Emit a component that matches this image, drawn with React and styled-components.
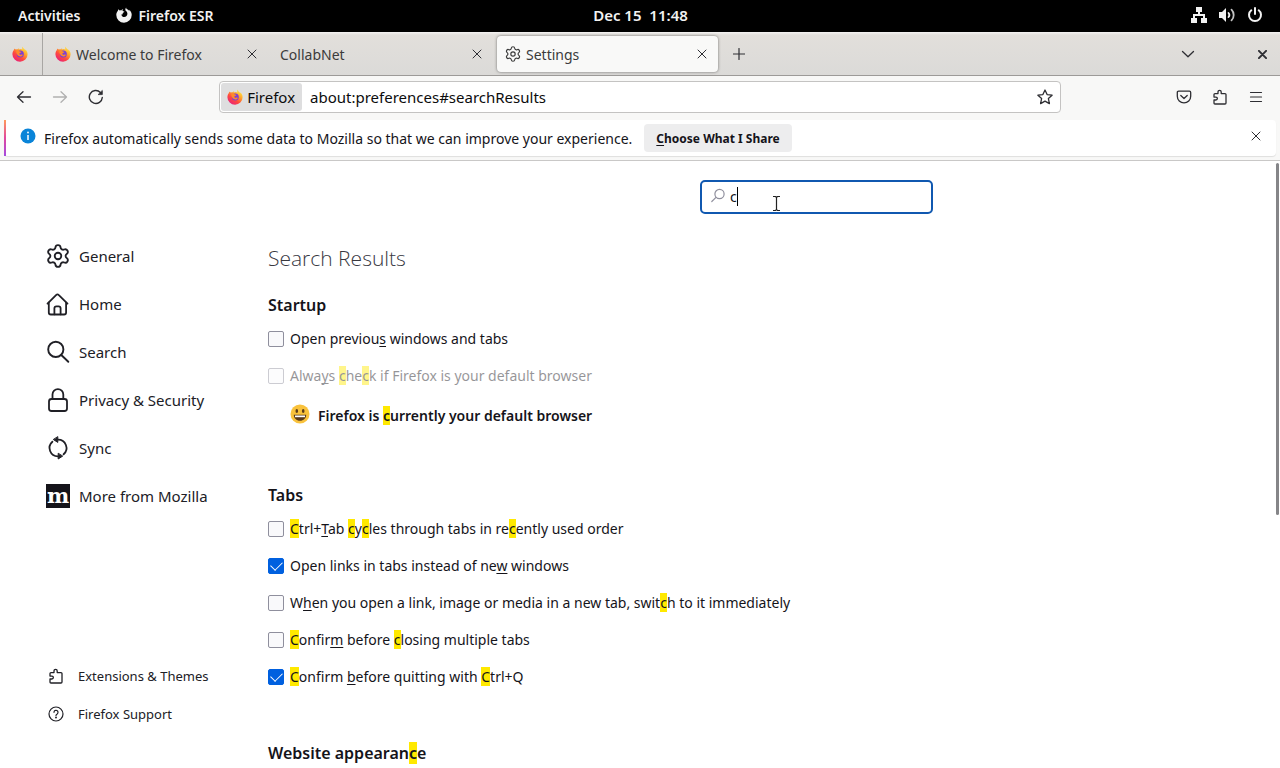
import React, { useState } from 'react';
import styled, { createGlobalStyle, css } from 'styled-components';

const GlobalStyle = createGlobalStyle`
  * {
    box-sizing: border-box;
  }

  body {
    margin: 0;
    background: #fff;
    color: #15141a;
    font-family: 'Noto Sans', 'Open Sans', sans-serif;
    font-size: 14px;
  }

  button, input {
    font: inherit;
    color: inherit;
  }
`;

const Screen = styled.div`
  display: flex;
  flex-direction: column;
  height: 100vh;
  overflow: hidden;
`;

/* ---------- desktop bar ---------- */

const DesktopBar = styled.header`
  display: grid;
  grid-template-columns: 1fr auto 1fr;
  align-items: center;
  flex: none;
  height: 32px;
  padding: 0 17px 2px 18px;
  background: #000;
  color: #f2f2f2;
  font-weight: 600;
  white-space: pre;
`;

const DesktopGroup = styled.div`
  display: flex;
  align-items: center;
  justify-content: ${({ $end }) => ($end ? 'flex-end' : 'flex-start')};
  gap: ${({ $end }) => ($end ? '12px' : '36px')};
`;

const DesktopButton = styled.button`
  display: flex;
  align-items: center;
  gap: 6px;
  padding: 0;
  border: 0;
  background: none;
`;

const Clock = styled(DesktopButton)`
  font-size: 15px;
`;

/* ---------- tabs ---------- */

const TabStrip = styled.nav`
  display: flex;
  align-items: center;
  flex: none;
  height: 44px;
  padding-top: 1px;
  background: linear-gradient(#f4f3f2, #e2dfdb 3px, #dbdad8);
  border-bottom: 1px solid #9c9a98;
  color: #3b3b3b;
`;

const PinnedTab = styled.button`
  display: flex;
  align-items: center;
  align-self: stretch;
  width: 43px;
  padding: 0 0 0 12px;
  border: 0;
  border-right: 1px solid #a8a6a3;
  background: none;
`;

const Tab = styled.div`
  display: flex;
  align-items: center;
  gap: 5px;
  width: 225px;
  height: 36px;
  padding: 0 8px 0 12px;

  ${({ $active }) => $active && css`
    width: 221px;
    margin-left: 4px;
    padding-left: 8px;
    border-radius: 4px;
    background: #f9f9f8;
    box-shadow: 0 0 3px rgba(0, 0, 0, 0.5);
  `}
`;

const TabTitle = styled.span`
  flex: 1;
`;

const IconButton = styled.button`
  display: flex;
  align-items: center;
  justify-content: center;
  flex: none;
  width: ${({ $size }) => $size || 36}px;
  height: ${({ $size }) => $size || 36}px;
  padding: 0;
  border: 0;
  background: none;
  color: ${({ $muted }) => ($muted ? '#b0b0b0' : '#2e2e33')};
`;

const WindowButtons = styled.div`
  display: flex;
  gap: 38px;
  margin-left: auto;
`;

/* ---------- toolbar ---------- */

const Toolbar = styled.div`
  display: grid;
  grid-template-columns: auto 1fr 8fr 1fr auto;
  align-items: center;
  flex: none;
  height: 44px;
  padding: 0 6px 3px;
  background: #f8f8f7;
`;

const ToolGroup = styled.div`
  display: flex;
  grid-column: ${({ $column }) => $column};
`;

const UrlBar = styled.div`
  display: flex;
  align-items: center;
  grid-column: 3;
  height: 32px;
  padding: 1px;
  border: 1px solid #c4c3c2;
  border-radius: 4px;
  background: #fff;
  color: #0c0c0d;
  font-size: 15px;
`;

const Identity = styled.button`
  display: flex;
  align-items: center;
  gap: 4px;
  height: 28px;
  padding: 0 7px 0 6px;
  border: 0;
  border-radius: 3px;
  background: #dededf;
`;

const UrlInput = styled.input`
  flex: 1;
  min-width: 0;
  padding: 0 8px;
  border: 0;
  outline: 0;
  background: none;
`;

/* ---------- notification ---------- */

const NoticeWrap = styled.div`
  flex: none;
  height: 41px;
  padding: 0 4px 4px;
  background: #f8f8f7;
  border-bottom: 1px solid #c9c8c7;
`;

const Notice = styled.div`
  display: flex;
  align-items: center;
  height: 36px;
  padding-right: 10px;
  border-radius: 4px;
  background: #fff;
  box-shadow: 0 1px 1px rgba(0, 0, 0, 0.1);

  &::before {
    content: '';
    align-self: stretch;
    width: 2px;
    margin-right: 14px;
    background: linear-gradient(#ff9a5a, #e0479e 50%, #a44be0);
  }
`;

const NoticeIcon = styled.svg`
  flex: none;
  margin-bottom: 4px;
`;

const NoticeText = styled.span`
  margin: 0 12px 0 8px;
`;

const NoticeButton = styled.button`
  height: 28px;
  padding: 0 12px;
  border: 0;
  border-radius: 4px;
  background: #ededee;
  font-size: 12px;
  font-weight: 700;
`;

const NoticeClose = styled(IconButton)`
  margin: 0 0 4px auto;
`;

/* ---------- preferences page ---------- */

const Page = styled.div`
  display: flex;
  flex: 1;
  min-height: 0;
  position: relative;
`;

const Sidebar = styled.aside`
  display: flex;
  flex-direction: column;
  justify-content: space-between;
  flex: none;
  width: 268px;
  padding: 71px 0 35px 46px;
`;

const NavLink = styled.a`
  display: flex;
  align-items: center;
  gap: 9px;
  height: 48px;
  color: #202026;
  font-size: 15px;
  text-decoration: none;
`;

const FooterLink = styled(NavLink)`
  gap: 14px;
  height: 38px;
  padding-left: 2px;
  font-size: 13px;
`;

const MozillaMark = styled.span`
  display: flex;
  justify-content: center;
  width: 24px;
  height: 24px;
  background: #15141a;
  color: #fff;
  font: bold 21px/24px 'DejaVu Serif', serif;
`;

const Content = styled.main`
  flex: 1;
  max-width: 665px;
  padding-top: 19px;
`;

const SearchBox = styled.label`
  display: flex;
  align-items: center;
  gap: 4px;
  position: relative;
  width: 233px;
  height: 34px;
  margin-left: auto;
  padding: 0 8px 2px;
  border: 2px solid #1058b0;
  border-radius: 5px;
  color: #8f8f9d;
`;

const SearchInput = styled.input`
  flex: 1;
  min-width: 0;
  padding: 0;
  border: 0;
  outline: 0;
  background: none;
  color: #15141a;
`;

const Caret = styled.span`
  position: absolute;
  left: 35px;
  top: 5px;
  width: 1px;
  height: 19px;
  background: #000;
`;

const Pointer = styled.svg`
  position: absolute;
  left: 70px;
  top: 13px;
`;

const PageTitle = styled.h1`
  height: 40px;
  margin: 24px 0 13px;
  color: #38383f;
  font-family: 'Open Sans', 'Noto Sans', sans-serif;
  font-size: 21px;
  font-weight: 300;
  line-height: 40px;
`;

const Section = styled.section`
  margin-bottom: 44px;
`;

const SectionTitle = styled.h2`
  margin: 0;
  font-size: 16px;
  font-weight: 600;
  line-height: 29px;
`;

const Option = styled.label`
  display: flex;
  align-items: center;
  gap: 6px;
  height: 37px;
  opacity: ${({ $disabled }) => ($disabled ? 0.45 : 1)};
`;

const Checkbox = styled.input`
  appearance: none;
  display: flex;
  justify-content: center;
  flex: none;
  width: 16px;
  height: 16px;
  margin: 0;
  border: 1px solid #8f8f9d;
  border-radius: 2px;
  background: #f9f9fb;

  &:checked {
    border-color: #0060df;
    background: #0060df;
  }

  &:checked::before {
    content: '';
    width: 6px;
    height: 10px;
    border: solid #fff;
    border-width: 0 1px 1px 0;
    transform: rotate(45deg);
  }
`;

const Status = styled.p`
  display: flex;
  align-items: center;
  gap: 8px;
  height: 43px;
  margin: 0;
  padding-left: 22px;
  font-weight: 600;
`;

const StatusIcon = styled.svg`
  margin-bottom: 4px;
`;

const Mark = styled.mark`
  background: #ffe900;
  color: inherit;
`;

const Key = styled.u`
  text-underline-offset: 2px;
  text-decoration-skip-ink: none;
`;

const Scrollbar = styled.div`
  position: absolute;
  top: 2px;
  right: 1px;
  width: 3px;
  height: 58%;
  border-radius: 2px;
  background: #858588;
`;

/* ---------- icons ---------- */

const Icon = ({ size = 16, box = 16, stroke = 1.2, children }) => (
  <svg
    width={size}
    height={size}
    viewBox={`0 0 ${box} ${box}`}
    fill="none"
    stroke="currentColor"
    strokeWidth={stroke}
    strokeLinecap="round"
    strokeLinejoin="round"
    aria-hidden="true"
  >
    {children}
  </svg>
);

const FirefoxLogo = ({ id }) => (
  <svg width="16" height="16" viewBox="0 0 16 16" aria-hidden="true">
    <defs>
      <linearGradient id={`${id}-body`} x1="0.85" y1="0.05" x2="0.2" y2="0.95">
        <stop offset="0" stopColor="#fff04a" />
        <stop offset="0.35" stopColor="#ffa32b" />
        <stop offset="0.65" stopColor="#ff4a3d" />
        <stop offset="1" stopColor="#e8217c" />
      </linearGradient>
    </defs>
    <path
      d="M10.4.4c.3 1.1 1 1.7 1.9 2.5.6.5 1 1 1.3 1.5-.1-.5-.2-.9-.4-1.2 1.5 1.1 2.4 3 2.4 5A7.5 7.5 0 0 1 8 15.7 7.6 7.6 0 0 1 .4 8.2c0-1.9.7-3.4 1.5-4.3l.2-1.5c.4.3.7.6 1 1 .7-.1 1.3 0 1.9.2.7-.9 1.6-1.3 2.5-1.4-.5.4-.8.8-.9 1.3 1.5-.7 2.9-.7 4 .1-.4-1-.6-2.2-.2-3.2z"
      fill={`url(#${id}-body)`}
    />
    <circle cx="8.3" cy="8" r="3.5" fill="#7b3fd6" />
    <path d="M4.2 4.6c1.5-.6 2.9 0 3.5.8.8.1 1.5.2 1.7.6-.3.6-1.3.8-1.9 1.2-.4.9.3 1.7 1.3 1.5 1-.2 1.6-.3 2 .2-.6 1.3-2 1.8-3.4 1.4-2.2-.5-3.5-3.2-3.2-5.7z" fill="#ff8a2b" />
  </svg>
);

const FirefoxGlyph = () => (
  <svg width="16" height="16" viewBox="0 0 16 16" fill="currentColor" aria-hidden="true">
    <path d="M2.3 2.2c.4.2.8.7 1.1 1.2.6-.2 1.2-.2 1.8 0 .5-.7 1.2-1.1 2-1.2-.5.6-.7 1.1-.6 1.7.3.4.9.4 1.7.5.1.7-.4 1-1.5 1.6-.3.6 0 1 .2 1.3-.8-.1-1.2.1-1.6.4.3 1.5 1.5 2.3 2.8 2.3 1.9 0 3.200-1.400 3.200-3.200 0-1.400-.6-2.500-1.900-3.400-.4-.9-.1-1.900.6-2.900 0 1 .6 1.500 1.700 2.100.7.500 1.200 1 1.500 1.600l-.1-1.500c1.500 1.200 2.500 3.100 2.500 5A7.700 7.700 0 0 1 8 15.700 7.700 7.700 0 0 1 .3 8c0-1.600.6-3.100 1.600-4.200z" />
  </svg>
);

const CloseIcon = ({ size = 10, stroke = 1 }) => (
  <Icon size={size} box={10} stroke={stroke}>
    <path d="M1 1l8 8M9 1L1 9" />
  </Icon>
);

const GearIcon = ({ size, stroke }) => (
  <svg
    width={size}
    height={size}
    viewBox="1 1 22 22"
    fill="none"
    stroke="currentColor"
    strokeWidth={stroke}
    strokeLinejoin="round"
    aria-hidden="true"
  >
    <path d="M9.67 4.14a2.34 2.34 0 0 1 4.66 0 2.34 2.34 0 0 0 3.32 1.91 2.34 2.34 0 0 1 2.33 4.03 2.34 2.34 0 0 0 0 3.84 2.34 2.34 0 0 1-2.33 4.03 2.34 2.34 0 0 0-3.32 1.91 2.34 2.34 0 0 1-4.66 0 2.34 2.34 0 0 0-3.32-1.91 2.34 2.34 0 0 1-2.33-4.03 2.34 2.34 0 0 0 0-3.84A2.34 2.34 0 0 1 6.35 6.05a2.34 2.34 0 0 0 3.32-1.91z" />
    <circle cx="12" cy="12" r="3" />
  </svg>
);

const PuzzleIcon = () => (
  <Icon stroke={1.3}>
    <path d="M2 14.2V11h1.9a1.4 1.4 0 0 0 0-2.9H2V5.6c0-.6.4-1 1-1h3V2.9a1.6 1.6 0 0 1 3.2 0v1.7H13c.6 0 1 .4 1 1V14c0 .6-.4 1-1 1H3c-.6 0-1-.3-1-.8z" />
  </Icon>
);

const HomeIcon = () => (
  <Icon size={24} box={24} stroke={1.8}>
    <path d="M1.500 11.600L10.300 2.800a1.600 1.600 0 0 1 2.300 0l8.900 8.800" />
    <path d="M2.800 10.600v9.900a2 2 0 0 0 2 2h13.300a2 2 0 0 0 2-2v-9.900" />
    <path d="M8.400 22.300v-6a2 2 0 0 1 2-2h2.200a2 2 0 0 1 2 2v6" />
  </Icon>
);

const SearchIcon = () => (
  <Icon size={24} box={24} stroke={1.9}>
    <circle cx="9.8" cy="9.4" r="7.6" />
    <path d="M15.300 15l7 6.800" />
  </Icon>
);

const LockIcon = () => (
  <Icon size={24} box={24} stroke={1.8}>
    <rect x="3" y="11" width="18" height="12" rx="2.5" />
    <path d="M6.500 11V6.500a5.400 5.400 0 0 1 10.800 0V11" />
  </Icon>
);

const SyncIcon = () => (
  <Icon size={24} box={24} stroke={1.8}>
    <path d="M12 3.600A8.400 8.400 0 0 1 17.600 18.300" />
    <path d="M12 20.400A8.400 8.400 0 0 1 6.400 5.700" />
    <path d="M11.800 1v5.400L7.600 3.700zM12.200 17.600V23l4.200-2.700z" fill="currentColor" strokeWidth="1" />
  </Icon>
);

const HelpIcon = () => (
  <Icon>
    <circle cx="8" cy="8" r="7" />
    <path d="M6 6.300a2 2 0 1 1 3.200 1.600c-.8.500-1.200.8-1.200 1.500" />
    <circle cx="8" cy="11.500" r="0.4" fill="currentColor" />
  </Icon>
);

const Emoji = () => (
  <StatusIcon width="20" height="20" viewBox="0 0 20 20" aria-hidden="true">
    <circle cx="10" cy="10" r="9.5" fill="#f9c23c" />
    <ellipse cx="6.8" cy="7" rx="1.3" ry="2" fill="#5a3a1a" />
    <ellipse cx="13.2" cy="7" rx="1.3" ry="2" fill="#5a3a1a" />
    <path d="M3.800 10.800h12.400c0 3.600-2.700 6-6.200 6s-6.200-2.400-6.200-6z" fill="#5a3a1a" />
    <path d="M5 11.500h10v1.700H5z" fill="#fff" />
  </StatusIcon>
);

/* [x] is a search hit, _x_ is an access key */
const RichText = ({ text }) => (
  <span>
    {text.split(/(\[.\]|_._)/).map((part, i) => {
      if (part[0] === '[') return <Mark key={i}>{part[1]}</Mark>;
      if (part[0] === '_') return <Key key={i}>{part[1]}</Key>;
      return part;
    })}
  </span>
);

const categories = [
  { label: 'General', icon: <GearIcon size={24} stroke={1.7} /> },
  { label: 'Home', icon: <HomeIcon /> },
  { label: 'Search', icon: <SearchIcon /> },
  { label: 'Privacy & Security', icon: <LockIcon /> },
  { label: 'Sync', icon: <SyncIcon /> },
  { label: 'More from Mozilla', icon: <MozillaMark aria-hidden="true">m</MozillaMark> },
];

const startupOptions = [
  { text: 'Open previou_s_ windows and tabs' },
  { text: 'Alwa_y_s [c]he[c]k if Firefox is your default browser', disabled: true },
];

const tabOptions = [
  { text: '[C]trl+_T_ab [c]y[c]les through tabs in re[c]ently used order' },
  { text: 'Open links in tabs instead of ne_w_ windows', checked: true },
  { text: 'W_h_en you open a link, image or media in a new tab, swit[c]h to it immediately' },
  { text: '[C]onfir_m_ before [c]losing multiple tabs' },
  { text: '[C]onfirm _b_efore quitting with [C]trl+Q', checked: true },
];

const OptionList = ({ options }) =>
  options.map(({ text, checked, disabled }) => (
    <Option key={text} $disabled={disabled}>
      <Checkbox type="checkbox" defaultChecked={checked} disabled={disabled} />
      <RichText text={text} />
    </Option>
  ));

const App = () => {
  const [query, setQuery] = useState('c');

  return (
    <>
      <GlobalStyle />
      <Screen>
        <DesktopBar>
          <DesktopGroup>
            <DesktopButton>Activities</DesktopButton>
            <DesktopButton><FirefoxGlyph />Firefox ESR</DesktopButton>
          </DesktopGroup>
          <Clock>Dec 15  11:48</Clock>
          <DesktopGroup $end>
            <DesktopButton aria-label="Network">
              <svg width="16" height="16" viewBox="0 0 16 16" fill="currentColor">
                <path d="M5 0h6v5H9v2h5v4h2v5h-6v-5h2V9H4v2h2v5H0v-5h2V7h5V5H5z" />
              </svg>
            </DesktopButton>
            <DesktopButton aria-label="Volume">
              <svg width="16" height="16" viewBox="0 0 16 16" fill="none" stroke="currentColor" strokeWidth="1.8" strokeLinecap="round">
                <path d="M0 5h3l4-4v14l-4-4H0z" fill="currentColor" stroke="none" />
                <path d="M9.500 6a3 3 0 0 1 0 4" />
                <path d="M12.500 2.700a7.500 7.500 0 0 1 0 10.600" strokeOpacity="0.8" />
              </svg>
            </DesktopButton>
            <DesktopButton aria-label="Power">
              <Icon stroke={2}>
                <path d="M4.300 3.300a6 6 0 1 0 7.400 0M8 1v6" />
              </Icon>
            </DesktopButton>
          </DesktopGroup>
        </DesktopBar>

        <TabStrip>
          <PinnedTab aria-label="Firefox"><FirefoxLogo id="pin" /></PinnedTab>
          <Tab>
            <FirefoxLogo id="welcome" />
            <TabTitle>Welcome to Firefox</TabTitle>
            <IconButton $size={16} aria-label="Close tab"><CloseIcon /></IconButton>
          </Tab>
          <Tab>
            <TabTitle>CollabNet</TabTitle>
            <IconButton $size={16} aria-label="Close tab"><CloseIcon /></IconButton>
          </Tab>
          <Tab $active>
            <GearIcon size={16} stroke={1.6} />
            <TabTitle>Settings</TabTitle>
            <IconButton $size={16} aria-label="Close tab"><CloseIcon /></IconButton>
          </Tab>
          <IconButton $size={42} aria-label="New tab">
            <Icon size={12} box={12}><path d="M6 .5v11M.5 6h11" /></Icon>
          </IconButton>
          <WindowButtons>
            <IconButton aria-label="List all tabs">
              <Icon size={14} box={14} stroke={1.3}><path d="M1.500 4.500L7 9.800l5.500-5.300" /></Icon>
            </IconButton>
            <IconButton aria-label="Close window"><CloseIcon size={9} stroke={2.2} /></IconButton>
          </WindowButtons>
        </TabStrip>

        <Toolbar>
          <ToolGroup $column={1}>
            <IconButton aria-label="Back">
              <Icon stroke={1.3}><path d="M14.500 8H1.500M7 2.800L1.500 8 7 13.200" /></Icon>
            </IconButton>
            <IconButton $muted aria-label="Forward">
              <Icon stroke={1.3}><path d="M1.500 8h13M9 2.800L14.500 8 9 13.200" /></Icon>
            </IconButton>
            <IconButton aria-label="Reload">
              <Icon stroke={1.4}>
                <path d="M14.300 8.500A6.500 6.500 0 1 1 12.400 3.400" />
                <path d="M14.300 1.800v3.800h-3.800z" fill="currentColor" strokeWidth="0.8" />
              </Icon>
            </IconButton>
          </ToolGroup>
          <UrlBar>
            <Identity><FirefoxLogo id="identity" />Firefox</Identity>
            <UrlInput aria-label="Address" defaultValue="about:preferences#searchResults" />
            <IconButton $size={28} aria-label="Bookmark">
              <Icon stroke={1.3}>
                <path d="M8 1l2.100 4.600 5 .6-3.700 3.400 1 5L8 12.100l-4.400 2.500 1-5L.9 6.200l5-.6z" />
              </Icon>
            </IconButton>
          </UrlBar>
          <ToolGroup $column={5}>
            <IconButton aria-label="Save to Pocket">
              <Icon stroke={1.3}>
                <path d="M2.600 2.200h10.800c.8 0 1.300.5 1.300 1.300v3.700a6.700 6.700 0 0 1-13.400 0V3.500c0-.8.500-1.300 1.300-1.300z" />
                <path d="M4.800 6.500L8 9.500l3.200-3" />
              </Icon>
            </IconButton>
            <IconButton aria-label="Extensions"><PuzzleIcon /></IconButton>
            <IconButton aria-label="Menu">
              <Icon><path d="M2.500 3.500h11M2.500 8h11M2.500 12.500h11" /></Icon>
            </IconButton>
          </ToolGroup>
        </Toolbar>

        <NoticeWrap>
          <Notice>
            <NoticeIcon width="16" height="16" viewBox="0 0 16 16" aria-hidden="true">
              <circle cx="8" cy="8" r="7.5" fill="#0a84d8" />
              <path d="M8 7v5" stroke="#fff" strokeWidth="1.5" />
              <circle cx="8" cy="4.5" r="0.9" fill="#fff" />
            </NoticeIcon>
            <NoticeText>
              Firefox automatically sends some data to Mozilla so that we can improve your experience.
            </NoticeText>
            <NoticeButton><Key>C</Key>hoose What I Share</NoticeButton>
            <NoticeClose $size={20} aria-label="Dismiss"><CloseIcon /></NoticeClose>
          </Notice>
        </NoticeWrap>

        <Page>
          <Sidebar>
            <nav>
              {categories.map(({ label, icon }) => (
                <NavLink key={label} href="#">{icon}{label}</NavLink>
              ))}
            </nav>
            <div>
              <FooterLink href="#"><PuzzleIcon />Extensions & Themes</FooterLink>
              <FooterLink href="#"><HelpIcon />Firefox Support</FooterLink>
            </div>
          </Sidebar>

          <Content>
            <SearchBox>
              <Icon><circle cx="9.5" cy="6" r="4.6" /><path d="M6 9.300L1.800 13.500" /></Icon>
              <SearchInput
                type="text"
                aria-label="Find in Settings"
                value={query}
                onChange={(e) => setQuery(e.target.value)}
              />
              <Caret />
              <Pointer width="9" height="17" viewBox="0 0 9 17" fill="none" stroke="#222" strokeWidth="1.2">
                <path d="M1 1.500h2.500l1 1 1-1H8M4.500 2.500v12M1 15.500h2.500l1-1 1 1H8" />
              </Pointer>
            </SearchBox>

            <PageTitle>Search Results</PageTitle>

            <Section>
              <SectionTitle>Startup</SectionTitle>
              <OptionList options={startupOptions} />
              <Status>
                <Emoji />
                <RichText text="Firefox is [c]urrently your default browser" />
              </Status>
            </Section>

            <Section>
              <SectionTitle>Tabs</SectionTitle>
              <OptionList options={tabOptions} />
            </Section>

            <Section>
              <SectionTitle><RichText text="Website appearan[c]e" /></SectionTitle>
            </Section>
          </Content>
          <Scrollbar />
        </Page>
      </Screen>
    </>
  );
};

export default App;
